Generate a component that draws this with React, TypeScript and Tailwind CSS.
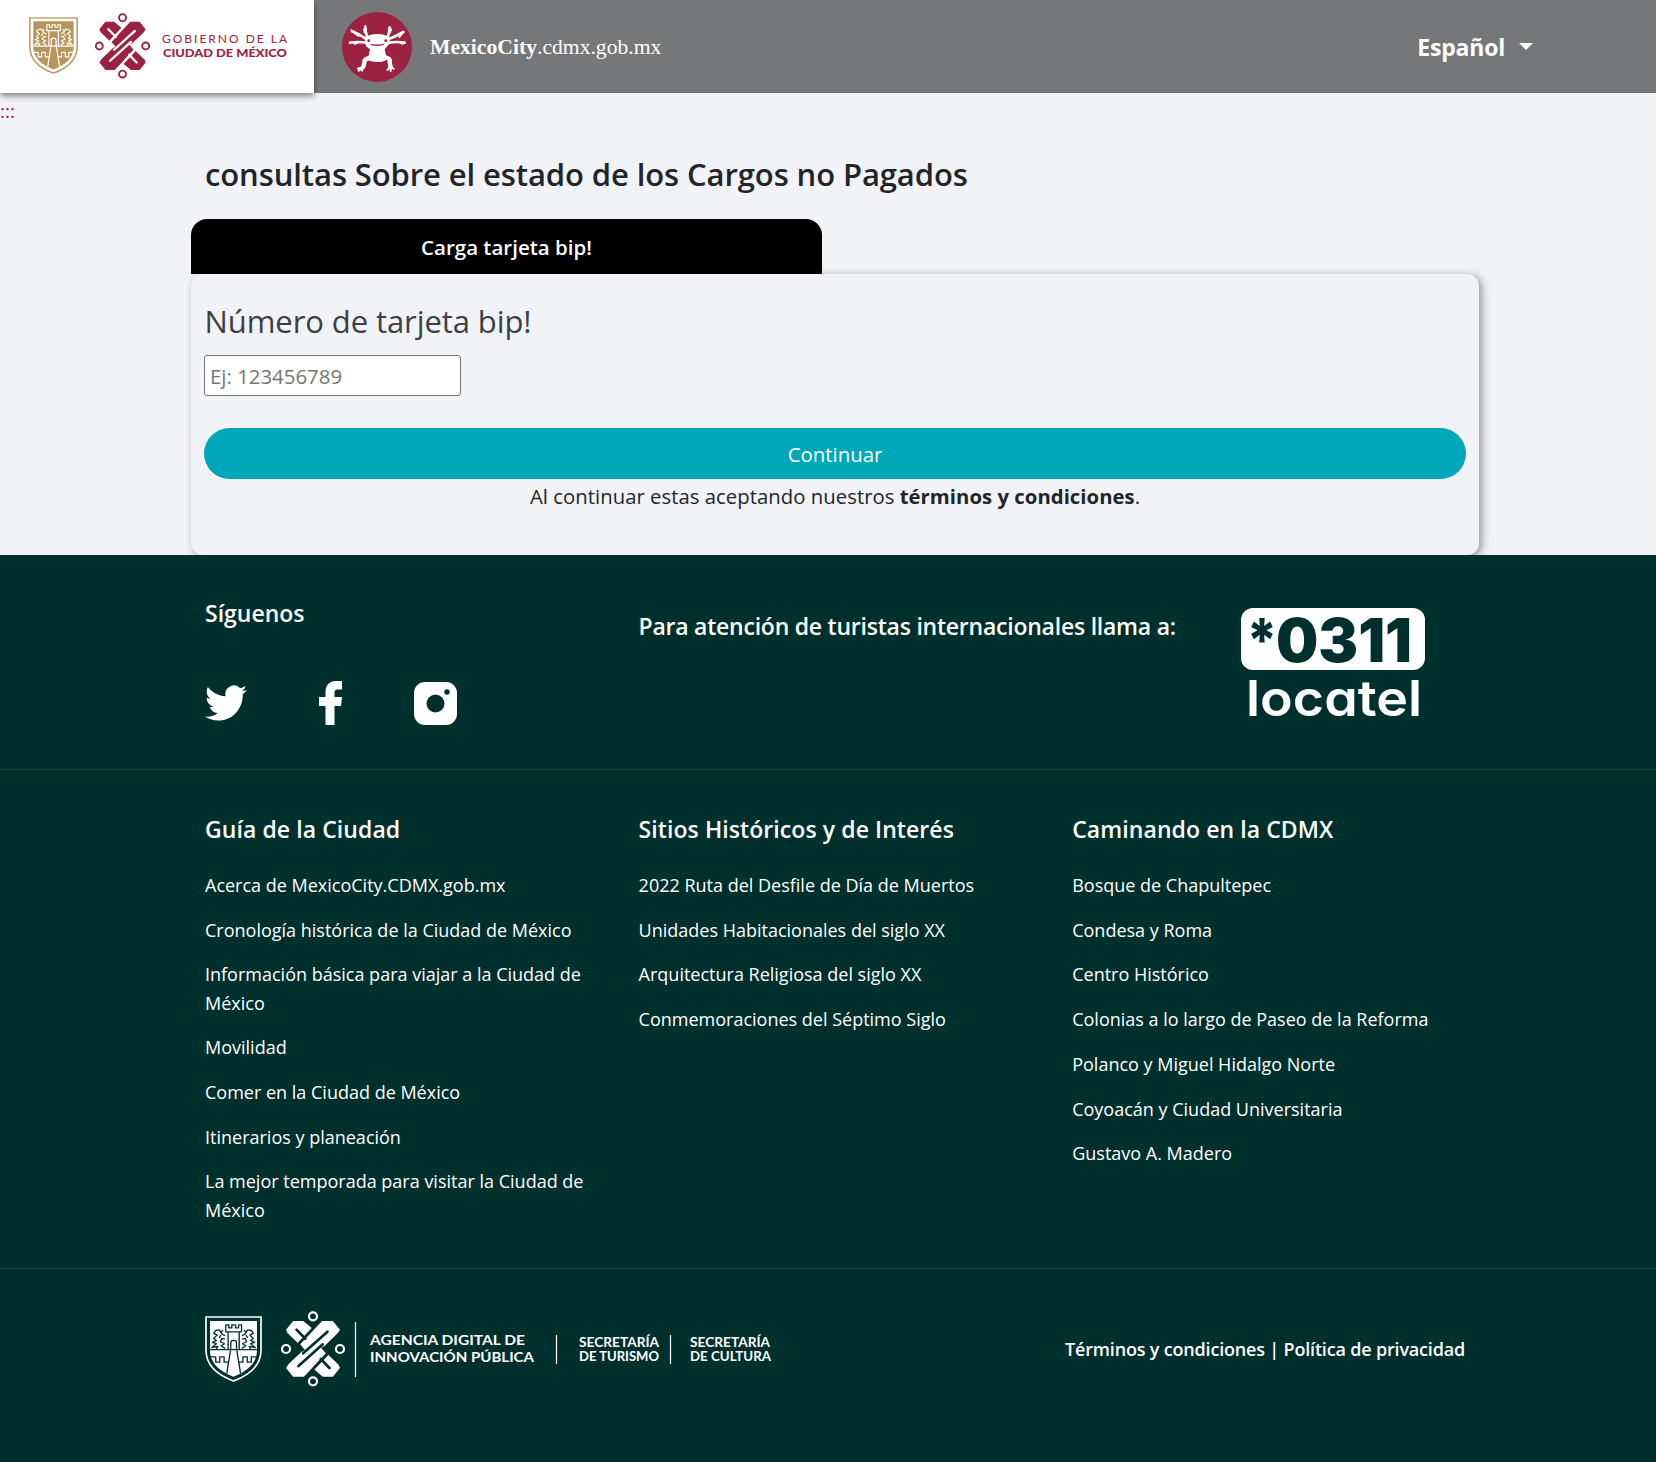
import React from "react";

const guia = [
  "Acerca de MexicoCity.CDMX.gob.mx",
  "Cronología histórica de la Ciudad de México",
  "Información básica para viajar a la Ciudad de México",
  "Movilidad",
  "Comer en la Ciudad de México",
  "Itinerarios y planeación",
  "La mejor temporada para visitar la Ciudad de México",
];
const sitios = [
  "2022 Ruta del Desfile de Día de Muertos",
  "Unidades Habitacionales del siglo XX",
  "Arquitectura Religiosa del siglo XX",
  "Conmemoraciones del Séptimo Siglo",
];
const caminando = [
  "Bosque de Chapultepec",
  "Condesa y Roma",
  "Centro Histórico",
  "Colonias a lo largo de Paseo de la Reforma",
  "Polanco y Miguel Hidalgo Norte",
  "Coyoacán y Ciudad Universitaria",
  "Gustavo A. Madero",
];

function Shield({ className, bg }: { className: string; bg: string }) {
  return (
    <svg viewBox="0 0 170 200" className={className} preserveAspectRatio="none" fill="none">
      <path d="M3 3H167V104C167 152 130 180 85 197C40 180 3 152 3 104Z" stroke="currentColor" strokeWidth="5" />
      <path d="M15 15H155V104C155 145 124 169 85 184C46 169 15 145 15 104Z" fill="currentColor" />
      <g stroke={bg} strokeWidth="4" strokeLinejoin="round">
        <path d="M15 102H155" />
        <path d="M69 102V48H62V27H71V36H80V27H91V36H100V27H109V48H102V102M69 48H102" />
        <path d="M77 102V82Q77 74 85 74Q94 74 94 82V102" />
        <path d="M76 104L65 174M95 104L106 174" />
        <path d="M17 124H32V140H44V124H57V140H70M153 124H138V140H126V124H113V140H101" />
        <path d="M60 60L50 54L43 42L32 44L26 52L36 58L26 68L34 74L22 80L34 84L20 96L38 92L34 100M60 70L50 68L46 78L58 84L48 90L60 98M48 58L42 66M54 44L48 48" />
        <path d="M110 60L120 54L127 42L138 44L144 52L134 58L144 68L136 74L148 80L136 84L150 96L132 92L136 100M110 70L120 68L124 78L112 84L122 90L110 98M122 58L128 66M116 44L122 48" />
      </g>
    </svg>
  );
}

function Knot({ className, bg }: { className: string; bg: string }) {
  return (
    <svg viewBox="0 0 190 228" className={className} preserveAspectRatio="none" fill="none">
      <g fill="currentColor">
        <path d="M36 30H66L92 52L50 96L19 66L15 56Z" />
        <path d="M154 197H124L98 175L140 131L171 161L175 171Z" />
        <path d="M57 100L103 50L122 30H154L175 56L168 67L130 104L119 110L133 127L87 177L68 197H36L15 171L22 160L60 123L71 117Z" />
      </g>
      <g stroke={bg} strokeWidth="8">
        <path strokeLinecap="round" d="M46 56L72 83M144 171L118 144" />
        <path strokeLinecap="round" d="M138 62L66 127M52 165L124 100" />
        <path d="M101 46L53 97M89 181L137 130" strokeWidth="7" />
      </g>
      <g stroke="currentColor" strokeWidth="6.5">
        <circle cx="95" cy="16" r="12" />
        <circle cx="95" cy="211" r="12" />
        <circle cx="15" cy="114" r="12" />
        <circle cx="175" cy="114" r="12" />
      </g>
    </svg>
  );
}

function Axolotl() {
  return (
    <svg viewBox="0 0 210 210" className="h-[70px] w-[70px]" fill="none">
      <circle cx="105" cy="105" r="105" fill="#9b2241" />
      <g stroke="#fff" strokeLinecap="round" strokeLinejoin="round">
        <path strokeWidth="8" d="M76 76Q70 62 70 44M137 76Q142 60 143 46M74 82Q52 66 30 58M138 82Q160 74 184 60M72 92Q48 88 24 92M140 92Q164 88 188 92" />
        <path strokeWidth="5" d="M30 58L28 54M36 58L40 66L50 72M48 92L38 96M184 60L172 76M174 92L182 96M66 52L68 62M148 52L142 66" />
        <path strokeWidth="13" d="M84 138Q66 140 67 152L64 164M128 136Q146 138 143 150L146 166" />
        <path strokeWidth="6" d="M64 164L48 170M62 166L50 176M64 166L60 176M142 166L136 174M146 166L146 177M148 164L155 170" />
      </g>
      <path fill="#fff" d="M72 76Q84 66 106 66Q128 66 140 76Q148 90 140 98Q132 106 128 112Q130 126 136 140Q128 150 106 150Q84 150 76 142Q82 126 84 112Q70 104 70 94Q68 84 72 76Z" />
      <path stroke="#9b2241" strokeWidth="4" strokeLinecap="round" d="M88 98Q106 102 124 97" />
      <circle cx="80" cy="86" r="4" fill="#9b2241" />
      <circle cx="131" cy="86" r="4" fill="#9b2241" />
    </svg>
  );
}

function LinkColumn({ title, items }: { title: string; items: string[] }) {
  return (
    <div className="w-[433.6px]">
      <h3 className="text-[23px] leading-7 font-semibold tracking-[0.08px]">{title}</h3>
      <ul className="mt-[28px] flex w-[390px] flex-col gap-[16.5px]">
        {items.map((t) => (
          <li key={t} className="text-[18px] leading-[28.2px]">
            {t}
          </li>
        ))}
      </ul>
    </div>
  );
}

export default function App() {
  return (
    <div className="flex h-[1462px] w-[1656px] flex-col overflow-hidden bg-[#f1f3f6] font-['Open_Sans','Noto_Sans',sans-serif] text-[#212529]">
      <header className="flex h-[93px] shrink-0 bg-[#767778]">
        <div className="flex h-[93px] w-[314px] items-center bg-white pl-[29px] shadow-[0_3px_6px_rgba(0,0,0,0.45)]">
          <Shield className="mt-[-3px] h-[57px] w-[49px] text-[#b8955a]" bg="#fff" />
          <Knot className="mt-[-2px] ml-[17px] h-[66px] w-[55px] text-[#9b2241]" bg="#fff" />
          <svg className="mt-[-2px] ml-[11px] h-[40px] w-[127px] text-[#9b2241]" viewBox="0 0 127 40" fill="currentColor">
            <text x="1" y="16.5" textLength="125" className="font-[Lato] text-[12px] font-normal">GOBIERNO DE LA</text>
            <text x="2" y="30.500" textLength="124" lengthAdjust="spacingAndGlyphs" className="font-[Lato] text-[11.5px] font-black">CIUDAD DE MÉXICO</text>
          </svg>
        </div>
        <div className="flex flex-1 items-center pl-[28px]">
          <Axolotl />
          <p className="ml-[18px] font-['Liberation_Serif',serif] text-[21.65px] leading-7 text-white">
            <b>MexicoCity</b>.cdmx.gob.mx
          </p>
          <button className="mr-[123px] ml-auto flex items-center gap-[14px] text-[23px] leading-8 font-bold tracking-[-0.2px] text-white">
            Español
            <svg className="h-[7px] w-[14px]" viewBox="0 0 14 7">
              <path d="M0 0H14L7 7Z" fill="#fff" />
            </svg>
          </button>
        </div>
      </header>

      <div className="h-[56px] shrink-0 pt-[4px] text-[19px] leading-7 text-[#9b2241]">:::</div>

      <main className="ml-[191px] flex h-[406px] w-[1288px] shrink-0 flex-col">
        <h1 className="h-[70px] pl-[14px] text-[31px] leading-[50px] font-semibold tracking-[-0.1px]">
          consultas Sobre el estado de los Cargos no Pagados
        </h1>
        <div className="h-[55px] w-[631px] rounded-t-2xl bg-black text-center text-[20.5px] leading-[56px] font-semibold text-white">
          Carga tarjeta bip!
        </div>
        <section className="h-[281px] rounded-xl px-[13px] pt-[25px] shadow-[3px_2px_8px_rgba(0,0,0,0.38)]">
          <label className="block h-[56px] pl-[0.5px] text-[31px] leading-[44px] tracking-[-0.08px] text-[#3c4043]">Número de tarjeta bip!</label>
          <input
            placeholder="Ej: 123456789"
            className="block h-[41px] w-[257px] rounded-[3px] border border-[#767676] bg-white px-[5px] pt-px text-[20.4px] placeholder:text-[#757575]"
          />
          <button className="mt-[32px] block h-[51px] w-full rounded-full bg-[#00a7b8] pt-px text-[20.4px] text-white">Continuar</button>
          <p className="mt-[2px] text-center text-[20.3px] leading-[30px] tracking-[0.04px]">
            Al continuar estas aceptando nuestros <b>términos y condiciones</b>.
          </p>
        </section>
      </main>

      <footer className="relative flex-1 bg-[#00302e] text-white">
        <div className="flex h-[215px] border-b border-[#0c4a42] pl-[205px]">
          <div className="w-[433.5px] pt-[44px]">
            <h3 className="text-[23px] leading-7 font-semibold">Síguenos</h3>
            <div className="mt-[53px] flex h-[46px] items-center">
              <svg viewBox="0 0 24 20" className="h-[36px] w-[42px]" preserveAspectRatio="none" fill="currentColor">
                <path d="M23.95 2.57a10 10 0 0 1-2.82.77 4.96 4.96 0 0 0 2.16-2.72c-.95.55-2 .95-3.13 1.18A4.92 4.92 0 0 0 11.78 6.3C7.69 6.1 4.07 4.13 1.64 1.16a4.8 4.8 0 0 0-.67 2.48c0 1.71.87 3.21 2.19 4.1a4.9 4.9 0 0 1-2.23-.62v.06a4.92 4.92 0 0 0 3.95 4.83 5 5 0 0 1-2.21.08 4.94 4.94 0 0 0 4.6 3.42A9.87 9.87 0 0 1 0 17.54a14 14 0 0 0 7.55 2.21c9.05 0 14-7.5 14-13.98 0-.21 0-.42-.02-.63a9.94 9.94 0 0 0 2.42-2.57z" />
              </svg>
              <svg viewBox="0 0 23 44" className="ml-[71.5px] h-[44px] w-[23px]" fill="currentColor">
                <path d="M6.5 44V25H0V16H6.5V11C6.5 4 10.5 0 17 0H23V8.5H18.5C16.5 8.5 15.5 9.5 15.5 11.5V16H23L22 25H15.5V44Z" />
              </svg>
              <svg viewBox="0 0 43 43" className="ml-[72.5px] h-[43px] w-[43px]">
                <rect width="43" height="43" rx="11" fill="#fff" />
                <circle cx="21.5" cy="21.5" r="9" fill="#00302e" />
                <circle cx="33" cy="10" r="2.7" fill="#00302e" />
              </svg>
            </div>
          </div>
          <h3 className="w-[602px] pt-[57px] text-[23px] leading-7 font-semibold tracking-[-0.23px]">
            Para atención de turistas internacionales llama a:
          </h3>
          <svg viewBox="0 0 184 110" className="mt-[53px] h-[110px] w-[184px] overflow-visible" fill="#fff">
            <rect width="184" height="62" rx="12" />
            <text x="5.500" y="54" fill="#00302e" textLength="31" lengthAdjust="spacingAndGlyphs" className="font-[Inter] text-[60px] font-extrabold">*</text>
            <text x="35" y="54" fill="#00302e" textLength="136" lengthAdjust="spacingAndGlyphs" className="font-[Inter] text-[60px] font-black">0311</text>
            <text x="5" y="108" textLength="176" lengthAdjust="spacingAndGlyphs" className="font-[Inter] text-[50px] font-semibold [font-feature-settings:'cv11']">locatel</text>
          </svg>
        </div>

        <div className="flex h-[499px] border-b border-[#0c4a42] pt-[45px] pl-[205px]">
          <LinkColumn title="Guía de la Ciudad" items={guia} />
          <LinkColumn title="Sitios Históricos y de Interés" items={sitios} />
          <LinkColumn title="Caminando en la CDMX" items={caminando} />
        </div>

        <div className="flex items-center pt-[42px] pr-[191px] pl-[205px]">
          <Shield className="h-[66px] w-[57px] text-white" bg="#00302e" />
          <Knot className="ml-[19px] h-[76px] w-[64px] text-white" bg="#00302e" />
          <svg className="ml-[9px] h-[60px] w-[420px]" viewBox="0 0 420 60" fill="#fff">
            <path d="M1.500 3V58M202.500 16V45M316.500 16V45" stroke="#fff" strokeWidth="1.200" />
            <text x="16" y="26" textLength="155" lengthAdjust="spacingAndGlyphs" className="font-[Lato] text-[13.700px] font-bold">AGENCIA DIGITAL DE</text>
            <text x="16" y="43" textLength="164" lengthAdjust="spacingAndGlyphs" className="font-[Lato] text-[13.700px] font-bold">INNOVACIÓN PÚBLICA</text>
            <text x="225" y="27.500" textLength="80" lengthAdjust="spacingAndGlyphs" className="font-[Lato] text-[13px] font-bold">SECRETARÍA</text>
            <text x="225" y="41.500" textLength="80" lengthAdjust="spacingAndGlyphs" className="font-[Lato] text-[13px] font-bold">DE TURISMO</text>
            <text x="336" y="27.500" textLength="80" lengthAdjust="spacingAndGlyphs" className="font-[Lato] text-[13px] font-bold">SECRETARÍA</text>
            <text x="336" y="41.500" textLength="81" lengthAdjust="spacingAndGlyphs" className="font-[Lato] text-[13px] font-bold">DE CULTURA</text>
          </svg>
          <p className="ml-auto text-[18px] leading-7 font-semibold tracking-[-0.18px]">Términos y condiciones | Política de privacidad</p>
        </div>
      </footer>
    </div>
  );
}
